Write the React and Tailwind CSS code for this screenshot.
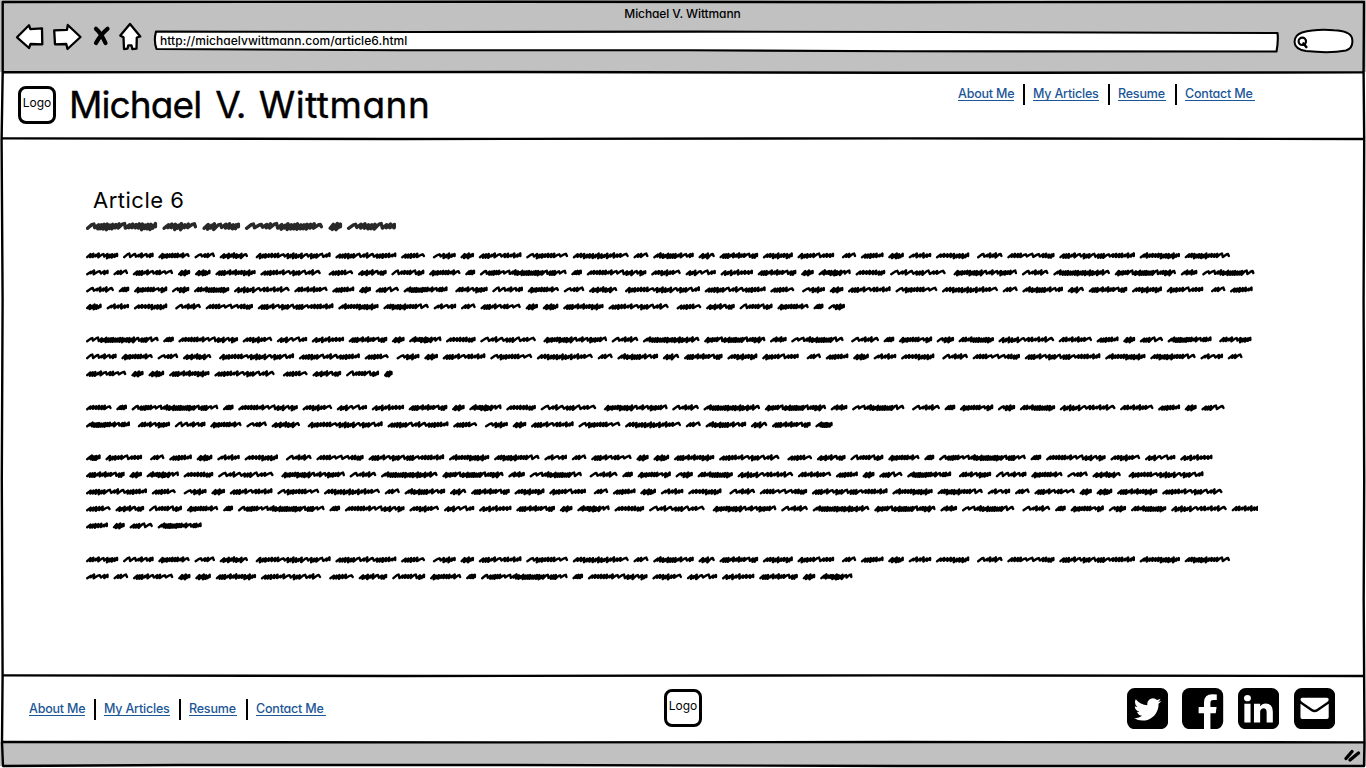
import React from "react";

// Widths of the scribbled words, in thirds of a pixel, with the rhythm of each
// word: i = narrow stroke, r = wide arch, q = dense deep stroke. D = sentence gap.
const TEXT = `97iirqi 92rriri 94qiiir 62rir 85qiqr D 225qiirqqrqri 183qqrirqii 72qir D 69rqi 41qi
128qiriii 126rqiirr 168iqqqiir 45ir 122iqqiri 49qr 116qiiirq 90iqiq 110qirii D 43ir 68qii 47qq 68iii
100iiqq D 77riir 142iirrriq 227qirqrqriiii 121iiiqqi 136iqqiirr 68iri 44ir 121qirirr 37qi 47qq 121qiiiqi
181qiirqrir D 74qir 86qirq 99riirq 94qiiir 30ii 260rqirriqqqqrqrr 32ii 179iiiirrqrq 89iqir 91qrri 97qiii
116qiiirq 38qi 97iiqqrr 89iiiq 167rirqrir D 191qiqqrirqir 80riir 170iqqqqqir 184qirqqqriqr 50iii 157rriqqqrr D
84riir 32ii 100qiirq 52rqi 106iiqqq 167qqriiir 100iiiir 66qii 36qi 70qrr 132iqqiirii D`
  .trim()
  .split(/\s+/);

const WORDS = [];
TEXT.forEach((t) => {
  if (t === "D") {
    WORDS[WORDS.length - 1].wide = true;
    return;
  }
  const m = t.match(/^(\d+)(\w+)$/);
  WORDS.push({ w: Number(m[1]) / 3, p: m[2], wide: false });
});
const COUNT = WORDS.length;

function take(start, n) {
  return Array.from({ length: n }, (_, i) => WORDS[(start + i) % COUNT]);
}

function word(w, p, wide = false) {
  return { w: w / 3, p, wide };
}

function indexOf(width, from = 0) {
  for (let i = from; i < COUNT; i++) if (Math.round(WORDS[i].w * 3) === width) return i;
  return 0;
}

const I260 = indexOf(260);
const I43 = indexOf(43);
const I47 = indexOf(47);
const I84 = indexOf(84);
const I44 = indexOf(44);
const I74 = indexOf(74);
const I116 = indexOf(116, I260);
const I132 = indexOf(132);
const I66 = indexOf(66);
const I136 = indexOf(136);

const upTo = (a, b) => take(a, ((b - a + COUNT) % COUNT) + 1);

const PARAGRAPHS = [
  {
    gap: "mt-0",
    lines: [
      { end: 1230, words: upTo(0, I136) },
      { end: 1254.5, words: upTo(I136 + 1, I84 - 1) },
      { end: 1252.7, words: upTo(I84, I43 + 1) },
      { end: 845, words: [...upTo(I47, I260 - 1), word(50, "rqi")] },
    ],
  },
  {
    gap: "mt-4",
    lines: [
      { end: 1251.5, words: [word(218, "rrqqqqqrqrr"), ...upTo(I260 + 1, 0)] },
      { end: 1242.5, words: upTo(1, I44) },
      { end: 392.7, words: [...upTo(I44 + 1, I74 + 2), word(26, "qi")] },
    ],
  },
  {
    gap: "mt-[17px]",
    lines: [
      { end: 1224.7, words: [word(77, "iiir"), word(32, "ii"), ...upTo(I260, I132 - 1)] },
      { end: 832.7, words: [...upTo(I132, I43 - 8), word(52, "iqq")] },
    ],
  },
  {
    gap: "mt-4",
    lines: [
      { end: 1212.5, words: [word(44, "iqi"), ...upTo(I43 - 1, I116 - 1)] },
      { end: 1203.5, words: upTo(I116, 5) },
      { end: 1222.5, words: upTo(6, I74 - 1) },
      { end: 1265, clip: 1258.3, words: upTo(I74, I66 - 1) },
      { end: 201.7, words: upTo(I66, I132) },
    ],
  },
  {
    gap: "mt-[17px]",
    lines: [
      { end: 1230, words: upTo(0, I136) },
      { end: 852.5, words: upTo(I136 + 1, I116 + 2) },
    ],
  },
];
PARAGRAPHS[2].lines[1].words = [...upTo(I132, I43 - 3), word(52, "iqq")];

const LEFT = 86;

// Zigzag pen stroke of one word, starting at x around the middle line cy.
function scribble(x, w, pattern, cy, k = 1) {
  const steps = [];
  for (const c of pattern) {
    if (c === "r") steps.push([2.3, -2.0, 1.5]);
    else if (c === "i") steps.push([1.1, -1.5, 1.5], [1.0, -2.3, 1.9]);
    else steps.push([1.0, -1.7, 2.7], [0.85, -1.3, 2.1], [0.9, -2.1, 2.7]);
  }
  const total = steps.reduce((s, a) => s + a[0], 0);
  const lead = 1.2 * k;
  const unit = (w - 2 * lead) / total;
  let cx = x + lead;
  let d = `M${cx.toFixed(1)} ${(cy + 1.6 * k).toFixed(1)}`;
  steps.forEach(([adv, top, bottom], i) => {
    const a = adv * unit;
    const j = ((i * 7 + pattern.length * 3) % 5) * 0.18;
    const last = i === steps.length - 1;
    const nx = cx + a;
    const px = Math.min(cx + a * 0.6 + 1.6 * k, x + w - lead);
    const ty = cy + (top + j) * k;
    const by = cy + (last ? 0.4 : bottom - j) * k;
    if (adv > 2) {
      d += `L${(px - 1.6 * k).toFixed(1)} ${(ty + 0.5).toFixed(1)}L${px.toFixed(1)} ${ty.toFixed(1)}`;
    } else {
      d += `L${px.toFixed(1)} ${ty.toFixed(1)}`;
    }
    d += `L${nx.toFixed(1)} ${by.toFixed(1)}`;
    cx = nx;
  });
  return d;
}

function ScribbleLine({ line }) {
  const { words, end, clip } = line;
  const sum = words.reduce((s, a) => s + a.w, 0);
  const slots = words.reduce((s, a, i) => (i === words.length - 1 ? s : s + (a.wide ? 1.65 : 1)), 0);
  const gap = (end - LEFT - sum) / slots;
  let x = 0;
  let d = "";
  words.forEach((a) => {
    d += scribble(x, a.w, a.p, 8.6);
    x += a.w + gap * (a.wide ? 1.65 : 1);
  });
  return (
    <svg className="block h-[17px] shrink-0 overflow-hidden" width={(clip || end + 1) - LEFT} height="17" fill="none">
      <path d={d} stroke="#000" strokeWidth="2.4" strokeLinecap="round" strokeLinejoin="round" />
    </svg>
  );
}

const SUBTITLE = [
  [0, 71, "rqqiriiqq"],
  [76.5, 34.5, "iqir"],
  [116.5, 37.5, "qriq"],
  [159, 78, "rrirqqqir"],
  [242.5, 13.5, "qi"],
  [261, 52, "riqrii"],
];

function Subtitle() {
  return (
    <svg className="block h-[17px] w-[310px] overflow-hidden" fill="none">
      {SUBTITLE.map(([x, w, p]) => (
        <path
          key={x}
          d={scribble(x, w, p, 8.2, 1.3)}
          stroke="#292929"
          strokeWidth="3.4"
          strokeLinecap="round"
          strokeLinejoin="round"
        />
      ))}
    </svg>
  );
}

function Logo() {
  return (
    <div className="flex h-[38px] w-[38px] shrink-0 items-center justify-center rounded-[8px] border-[3px] border-black bg-white pb-[4px]">
      <span className="text-[12px] leading-none">Logo</span>
    </div>
  );
}

const LINKS = [
  ["About Me", "w-14"],
  ["My Articles", "w-[66px]"],
  ["Resume", "w-12"],
  ["Contact Me", "w-[70px]"],
];

function Links() {
  return (
    <nav className="flex h-[21px] items-start">
      {LINKS.map(([label, width], i) => (
        <React.Fragment key={label}>
          {i > 0 && <span className="ml-[9px] mr-2 h-[21px] w-[2px] shrink-0 bg-black" />}
          <a
            className={`${width} mt-[2px] h-[15px] shrink-0 whitespace-nowrap border-b border-[#1b5697] text-[12.5px] font-medium leading-[15px] tracking-[-0.2px] text-[#1b5697]`}
          >
            {label}
          </a>
        </React.Fragment>
      ))}
    </nav>
  );
}

function NavIcons() {
  return (
    <svg className="block h-[32px] w-[128px] shrink-0" viewBox="14 21 128 32" stroke="#000" strokeWidth="2.3" strokeLinejoin="round" strokeLinecap="round" fill="#fff">
      <path d="M17 37.3 L29 25.2 L30.3 29.2 L42 28.4 L42.3 44.3 L30.5 44 L29 48 Z" />
      <path d="M54.2 30.4 L67 29.8 L67.8 25 L80.5 37 L67.5 49 L66.3 44 L55 44.3 Z" />
      <path d="M96 28.8 Q101 33 105.5 43 M107.5 28.8 Q101 34 96 43" strokeWidth="4.2" fill="none" />
      <path d="M130 24 L120.3 35.6 L123.5 37.2 L124 49 L127.5 48.6 L128.3 45.4 L131.5 45.4 L132.3 49 L136.5 48.6 L136.8 37.5 L140.3 36.5 Z" />
    </svg>
  );
}

function AddressBar() {
  return (
    <div className="relative h-[24px] w-[1126px] shrink-0">
      <svg className="absolute inset-0" width="1126" height="24" viewBox="153 29 1126 24">
        <path
          d="M156 31.5 L420 32 L700 31.6 L940 32 L1277.5 33 Q1278.5 41 1276.5 51.5 L900 51.3 L690 50.3 L400 50.2 L156.5 49 Q153.5 41 156 31.5 Z"
          fill="#fff"
          stroke="#000"
          strokeWidth="2.1"
          strokeLinejoin="round"
        />
      </svg>
      <span className="relative block pl-[7px] pt-[3px] text-[12px] font-medium leading-[17px] tracking-[0.04px]">
        http://michaelvwittmann.com/article6.html
      </span>
    </div>
  );
}

function SearchBox() {
  return (
    <svg className="block h-[26px] w-[62px] shrink-0" viewBox="1292 28 62 26" fill="none" stroke="#000" strokeWidth="2" strokeLinecap="round">
      <path d="M1302 32.5 Q1315 28.8 1334 30.2 Q1350 31 1352 38 Q1354 48 1346 50.5 Q1330 53.5 1306 51 Q1295 49.5 1294.5 42 Q1294.5 35 1302 32.5 Z" fill="#fff" />
      <circle cx="1302.3" cy="41.3" r="3.7" strokeWidth="2.2" />
      <path d="M1303.5 43.5 L1306.3 47" strokeWidth="2.6" />
    </svg>
  );
}

const FRAME = "M1248 1664h128q119 0 203.5-84.5t84.5-203.5v-960q0-119-84.5-203.5t-203.5-84.5h-960q-119 0-203.5 84.5t-84.5 203.5v960q0 119 84.5 203.5t203.5 84.5z";
const SOCIAL = [
  [
    "Twitter",
    "M1408 610q-56 25-121 34 68-40 93-117-65 38-134 51-61-66-153-66-87 0-148.5 61.5t-61.5 148.5q0 29 5 48-129-7-242-65t-192-155q-29 50-29 106 0 114 91 175-47-1-100-26v2q0 75 50 133.5t123 72.5q-29 8-51 8-13 0-39-4 21 63 74.5 104t121.5 42q-116 90-261 90-26 0-50-3 148 94 322 94 112 0 210-35.5t168-95 120.5-137 75-162 24.5-168.5q0-18-1-27 63-45 105-109z",
  ],
  [
    "Facebook",
    "M1188 1670v-601h199l30-232h-229v-148q0-56 23.5-84t91.5-28l122-1v-207q-63-9-178-9-136 0-217.5 80t-81.5 226v171h-200v232h200v601z",
  ],
  [
    "LinkedIn",
    "M365 1414h231v-694h-231v694zm246-908q-1-52-36-86t-93-34-94.5 34-36.5 86q0 51 35.5 85.5t92.5 34.5h1q59 0 95-34.5t36-85.5zm585 908h231v-398q0-154-73-233t-193-79q-136 0-209 117h2v-101h-231q3 66 0 694h231v-388q0-38 7-56 15-35 45-59.5t74-24.5q116 0 116 157v371z",
  ],
  [
    "Mail",
    "M370 560q0-66 66-66h920q66 0 66 62 0 50-60 92l-370 258q-96 70-192 0l-370-258q-60-42-60-88zM370 712l404 282q122 82 244 0l404-282v510q0 66-66 66h-920q-66 0-66-66z",
  ],
];

function SocialIcons() {
  return (
    <div className="flex gap-[14.5px]">
      {SOCIAL.map(([name, d]) => (
        <svg key={name} aria-label={name} className="h-[41.2px] w-[41.2px] shrink-0" viewBox="128 128 1536 1536">
          <path d={FRAME} fill="#000" />
          <path d={d} fill="#fff" />
        </svg>
      ))}
    </div>
  );
}

function SketchFrame() {
  return (
    <svg className="pointer-events-none absolute inset-0" width="1366" height="768" fill="none" stroke="#000" strokeWidth="2.4" strokeLinejoin="round">
      <path d="M2.7 2 L500 1.8 L900 2.2 L1364 2 L1363.6 72 L1364.2 140 L1363.6 300 L1364.2 480 L1363.7 600 L1364.5 742 L1364 766 L900 766 L500 765 L180 765 L3 766 L2 742 L2.6 676 L1.8 480 L2.6 300 L1.6 140 L2.7 72 Z" />
      <path d="M2 72.3 L500 72 L900 72.8 L1364 72.4" />
      <path d="M2 138.4 L400 139 L900 138.4 L1364 139" />
      <path d="M2 675.4 L400 676 L900 675.4 L1364 676" />
      <path d="M2 742 L500 742.4 L900 742 L1364 742.4" />
      <path d="M1346 758.5 L1352 751.5 M1350 760 L1358.5 753" strokeWidth="3.4" strokeLinecap="round" />
    </svg>
  );
}

export default function App() {
  return (
    <div className="relative flex h-[768px] w-[1366px] flex-col overflow-hidden bg-white font-['Inter','Liberation_Sans',sans-serif] text-black [font-feature-settings:'cv11']">
      <div className="flex h-[72px] shrink-0 flex-col bg-[#c1c1c1]">
        <div className="mt-[5px] h-[16px] pr-px text-center text-[12px] font-medium leading-[17px] tracking-[-0.1px]">Michael V. Wittmann</div>
        <div className="flex items-start pl-[14px]">
          <NavIcons />
          <div className="ml-[11px] mt-[8px]">
            <AddressBar />
          </div>
          <div className="ml-[13px] mt-[7px]">
            <SearchBox />
          </div>
        </div>
      </div>

      <header className="flex h-[67px] shrink-0 items-start justify-between pl-[18px] pr-[111px]">
        <div className="flex">
          <div className="mt-[14px]">
            <Logo />
          </div>
          <h1 className="ml-[13px] mt-[11px] whitespace-nowrap text-[37px] leading-[44px] [-webkit-text-stroke:0.4px_black]">
            <span className="tracking-[-0.9px]">Michael</span>
            <span className="tracking-[-1.5px] [word-spacing:5px]"> V. </span>
            <span className="tracking-[0.5px]">Wittmann</span>
          </h1>
        </div>
        <div className="mt-[12px]">
          <Links />
        </div>
      </header>

      <main className="flex h-[537px] shrink-0 flex-col pl-[86px]">
        <h2 className="mt-[47px] h-[28px] pl-[7px] text-[22px] leading-[29px] tracking-[0.5px]">Article 6</h2>
        <div className="mt-[4px]">
          <Subtitle />
        </div>
        <div className="mt-[12px] flex flex-col">
          {PARAGRAPHS.map(({ gap, lines }, i) => (
            <div key={i} className={`${gap} flex flex-col`}>
              {lines.map((line, j) => (
                <ScribbleLine key={j} line={line} />
              ))}
            </div>
          ))}
        </div>
      </main>

      <footer className="grid h-[66px] shrink-0 grid-cols-3 items-start pl-[30px] pr-[30px]">
        <div className="-ml-px mt-[23px]">
          <Links />
        </div>
        <div className="mt-[13px] flex justify-center">
          <Logo />
        </div>
        <div className="mt-[12px] flex justify-end pr-px">
          <SocialIcons />
        </div>
      </footer>

      <div className="h-[24px] shrink-0 bg-[#c1c1c1]" />
      <SketchFrame />
    </div>
  );
}
